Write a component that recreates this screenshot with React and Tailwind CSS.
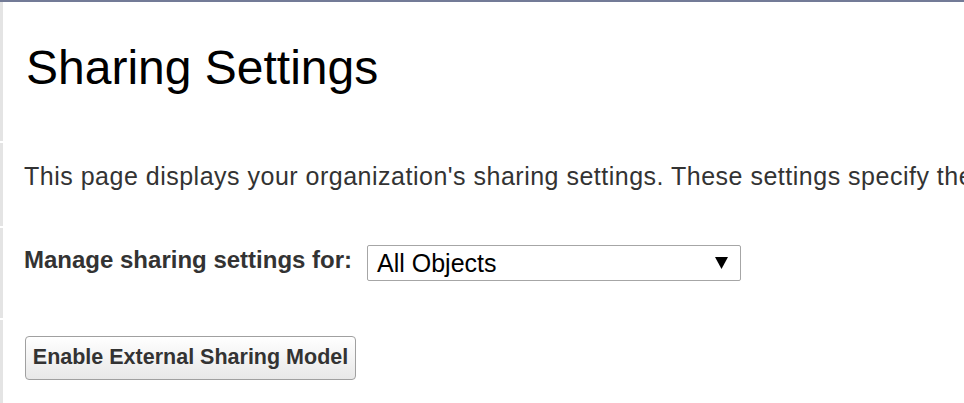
import React from "react";

const Section = ({ className = "", children }) => (
    <div className={`border-l-[3px] border-[#e4e4e4] pl-[21px] ${className}`}>
        {children}
    </div>
);

const App = () => {
    return (
        <div className="w-[964px] h-[403px] overflow-hidden bg-white border-t-2 border-[#737b97] font-['Liberation_Sans',Arial,sans-serif] flex flex-col gap-[2px]">
            <Section className="h-[139px] pt-[42px] shrink-0">
                <h1 className="ml-[2px] text-[48px] leading-none text-black whitespace-nowrap">Sharing Settings</h1>
            </Section>
            <Section className="h-[83px] pt-[21px] shrink-0 overflow-hidden">
                <p className="text-[25px] leading-none text-[#333] whitespace-nowrap tracking-[0.02em]">
                    This page displays your organization's sharing settings. These settings specify the
                </p>
            </Section>
            <Section className="h-[90px] shrink-0 flex items-start">
                <label className="w-[343px] shrink-0 mt-[20px] text-[24px] leading-none font-bold text-[#333] whitespace-nowrap">
                    Manage sharing settings for:
                </label>
                <div className="mt-[17px] w-[374px] h-[36px] border border-[#a6a6a6] rounded-[2px] flex items-center justify-between pl-[9px] pr-[12px]">
                    <span className="text-[25px] leading-none text-black">All Objects</span>
                    <svg width="13" height="12" viewBox="0 0 13 12">
                        <polygon points="0,0 13,0 6.5,12" fill="#000" />
                    </svg>
                </div>
            </Section>
            <Section className="flex-1 pt-[16px] pl-[22px]">
                <button className="h-[44px] w-[331px] rounded-[4px] border border-[#a0a0a0] bg-gradient-to-b from-white to-[#e8e8e8] text-[21.5px] font-bold text-[#333] leading-none whitespace-nowrap">
                    Enable External Sharing Model
                </button>
            </Section>
        </div>
    );
};

export default App;
